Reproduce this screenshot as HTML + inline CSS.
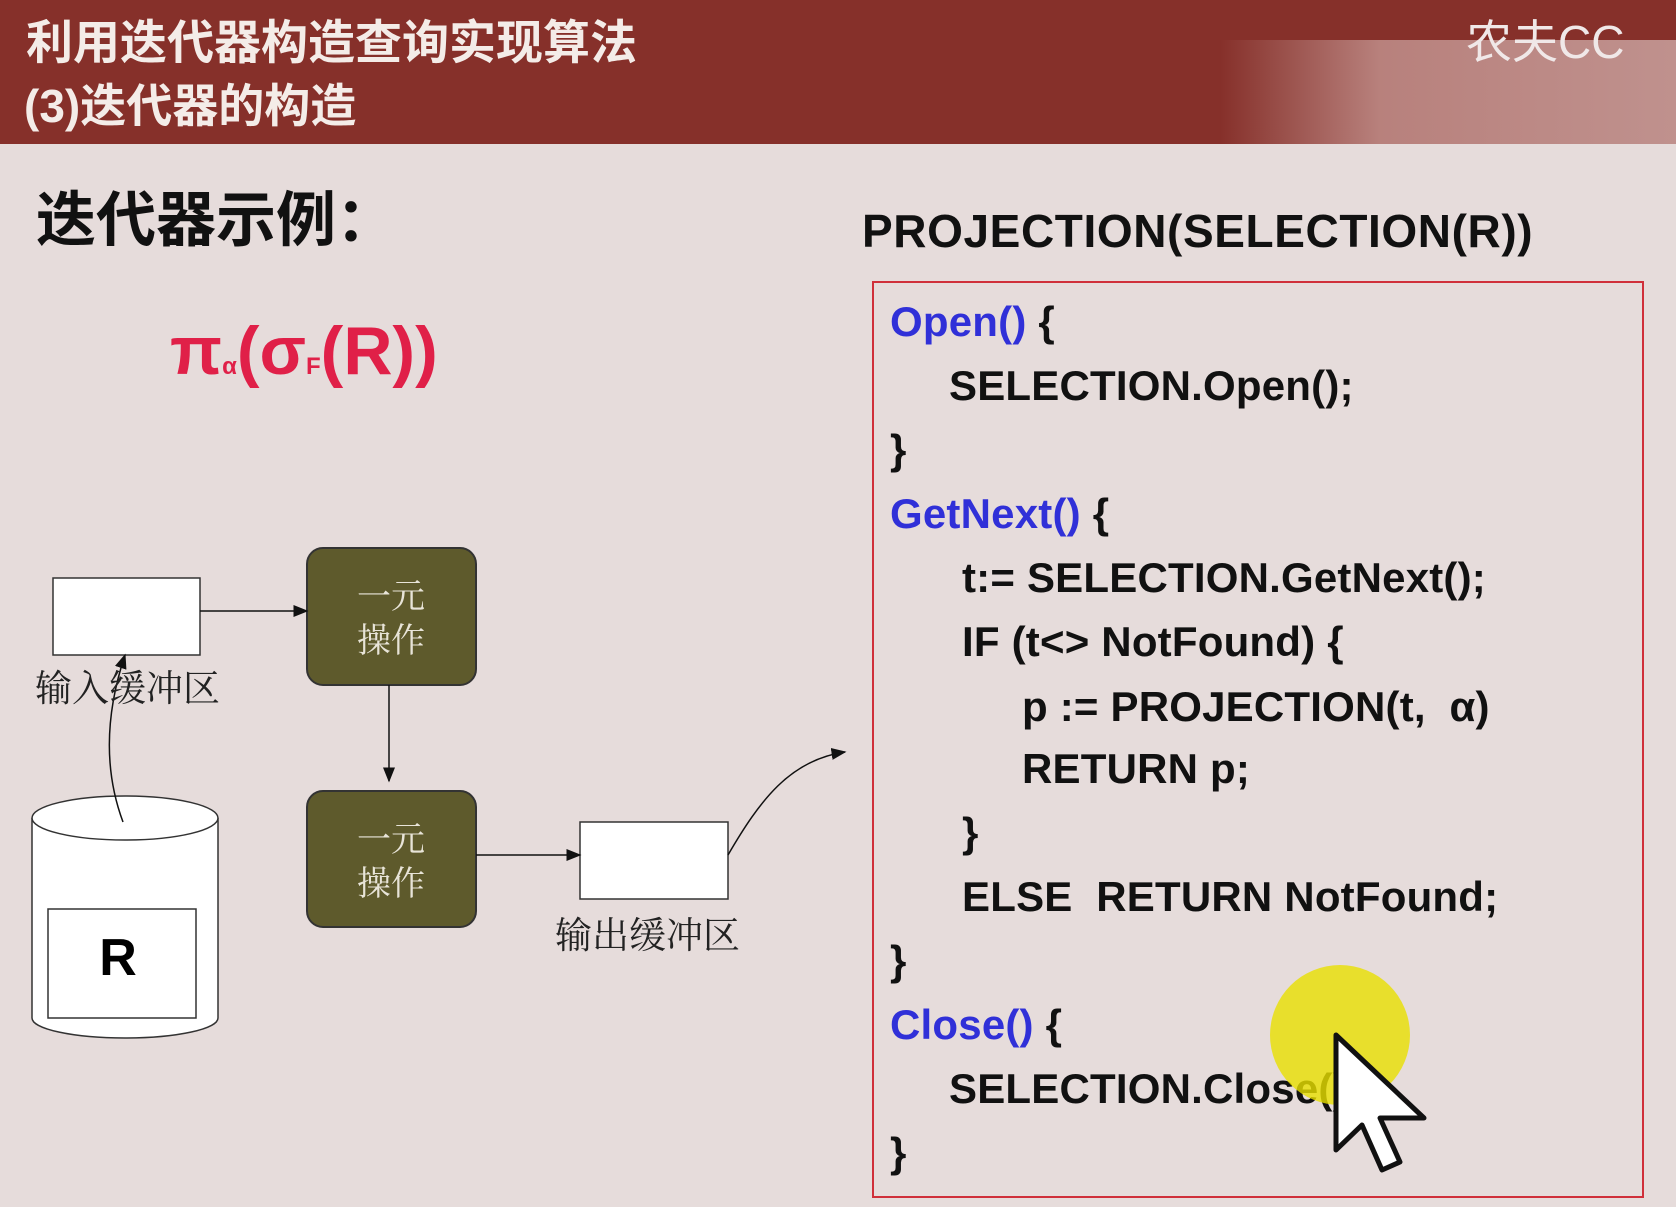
<!DOCTYPE html>
<html><head><meta charset="utf-8"><style>
body{margin:0;width:1676px;height:1207px;overflow:hidden;background:#e6dcdb;font-family:"Liberation Sans","Noto Sans CJK SC",sans-serif;position:relative}
.hdr{position:absolute;left:0;top:0;width:1676px;height:144px;background:#86302a}
.t{position:absolute;white-space:nowrap}
.code{position:absolute;left:872px;top:281px;width:772px;height:917px;border:2px solid #d0303a;box-sizing:border-box}
.cl{position:absolute;font-weight:bold;font-size:42px;color:#111;white-space:nowrap;line-height:1;letter-spacing:0.2px}
.b{color:#3030d8}
</style></head><body>
<div class="hdr"></div>
<div style="position:absolute;left:1220px;top:40px;width:456px;height:104px;background:linear-gradient(90deg,rgba(230,200,200,0),rgba(225,195,192,0.55) 35%,rgba(230,210,208,0.6))"></div>
<div class="t" style="left:26px;top:4px;font-size:47px;font-weight:bold;color:#f4ece8;font-family:'Noto Sans CJK SC',sans-serif">利用迭代器构造查询实现算法</div>
<div class="t" style="left:24px;top:70px;font-size:46px;font-weight:bold;color:#f4ece8;font-family:'Liberation Sans','Noto Sans CJK SC',sans-serif">(3)迭代器的构造</div>
<div class="t" style="left:1466px;top:6px;font-size:46px;color:#f0e8e8">农夫CC</div>
<div class="t" style="left:36px;top:172px;font-size:60px;font-weight:bold;color:#111;font-family:'Noto Sans CJK SC',sans-serif">迭代器示例：</div>
<div class="t" style="left:862px;top:204px;font-size:46px;font-weight:bold;color:#111;letter-spacing:0.6px">PROJECTION(SELECTION(R))</div>
<div class="t" style="left:170px;top:312px;font-size:68px;font-weight:bold;color:#e02048">π<span style="font-size:24px">α</span>(σ<span style="font-size:24px">F</span>(R))</div>
<div class="code"></div>
<div class="cl" style="left:890px;top:301px"><span class="b">Open()</span> {</div>
<div class="cl" style="left:949px;top:365px">SELECTION.Open();</div>
<div class="cl" style="left:890px;top:429px">}</div>
<div class="cl" style="left:890px;top:493px"><span class="b">GetNext()</span> {</div>
<div class="cl" style="left:962px;top:557px">t:= SELECTION.GetNext();</div>
<div class="cl" style="left:962px;top:621px">IF (t&lt;&gt; NotFound) {</div>
<div class="cl" style="left:1022px;top:686px">p := PROJECTION(t,&nbsp; α)</div>
<div class="cl" style="left:1022px;top:748px">RETURN p;</div>
<div class="cl" style="left:962px;top:812px">}</div>
<div class="cl" style="left:962px;top:876px">ELSE&nbsp; RETURN NotFound;</div>
<div class="cl" style="left:890px;top:940px">}</div>
<div class="cl" style="left:890px;top:1004px"><span class="b">Close()</span> {</div>
<div class="cl" style="left:949px;top:1068px">SELECTION.Close();</div>
<div class="cl" style="left:890px;top:1132px">}</div>
<svg style="position:absolute;left:0;top:0" width="1676" height="1207">
<defs><marker id="a" markerWidth="10" markerHeight="10" refX="9" refY="5" orient="auto"><path d="M0,1 L10,5 L0,9z" fill="#111"/></marker></defs>
<rect x="53" y="578" width="147" height="77" fill="#fff" stroke="#333" stroke-width="1.5"/>
<rect x="580" y="822" width="148" height="77" fill="#fff" stroke="#333" stroke-width="1.5"/>
<rect x="307" y="548" width="169" height="137" rx="16" fill="#5e5a2c" stroke="#333" stroke-width="2"/>
<rect x="307" y="791" width="169" height="136" rx="16" fill="#5e5a2c" stroke="#333" stroke-width="2"/>
<text x="391" y="608" font-size="34" fill="#e8e4d8" text-anchor="middle" font-family="Noto Serif CJK SC,serif">一元</text>
<text x="391" y="652" font-size="34" fill="#e8e4d8" text-anchor="middle" font-family="Noto Serif CJK SC,serif">操作</text>
<text x="391" y="851" font-size="34" fill="#e8e4d8" text-anchor="middle" font-family="Noto Serif CJK SC,serif">一元</text>
<text x="391" y="895" font-size="34" fill="#e8e4d8" text-anchor="middle" font-family="Noto Serif CJK SC,serif">操作</text>
<line x1="200" y1="611" x2="307" y2="611" stroke="#111" stroke-width="1.5" marker-end="url(#a)"/>
<line x1="389" y1="685" x2="389" y2="781" stroke="#111" stroke-width="1.5" marker-end="url(#a)"/>
<line x1="476" y1="855" x2="580" y2="855" stroke="#111" stroke-width="1.5" marker-end="url(#a)"/>
<path d="M728,855 C760,800 790,760 845,752" fill="none" stroke="#111" stroke-width="1.5" marker-end="url(#a)"/>
<path d="M32,818 L32,1018 A93,20 0 0 0 218,1018 L218,818" fill="#fff" stroke="#333" stroke-width="1.5"/>
<ellipse cx="125" cy="818" rx="93" ry="22" fill="#fff" stroke="#333" stroke-width="1.5"/>
<rect x="48" y="909" width="148" height="109" fill="#fff" stroke="#333" stroke-width="1.5"/>
<text x="118" y="975" font-size="52" font-weight="bold" text-anchor="middle" font-family="Liberation Sans,sans-serif">R</text>
<path d="M123,822 C100,760 110,700 125,655" fill="none" stroke="#111" stroke-width="1.5" marker-end="url(#a)"/>
<text x="35" y="701" font-size="37" fill="#222" font-family="Noto Serif CJK SC,serif">输入缓冲区</text>
<text x="555" y="948" font-size="37" fill="#222" font-family="Noto Serif CJK SC,serif">输出缓冲区</text>
<circle cx="1340" cy="1035" r="70" fill="#e8e000" opacity="0.8"/>
<path d="M1336,1035 L1336,1150 L1362,1125 L1382,1170 L1400,1162 L1380,1118 L1424,1118 Z" fill="#fff" stroke="#111" stroke-width="5" stroke-linejoin="round"/>
</svg>
</body></html>
